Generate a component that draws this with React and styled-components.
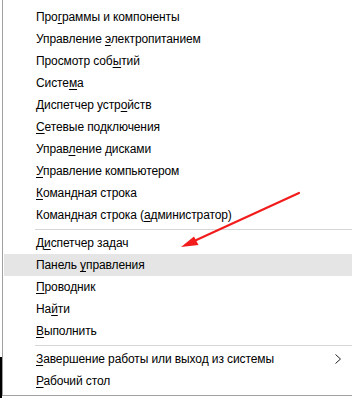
import React from 'react';
import styled, { createGlobalStyle } from 'styled-components';

const GlobalStyle = createGlobalStyle`
    html, body {
        margin: 0;
        padding: 0;
        background: #fff;
    }
    body {
        font-family: "Segoe UI", "Liberation Sans", Arial, sans-serif;
        overflow: hidden;
    }
`

const groups = [
    [
        ['Про', 'г', 'раммы и компоненты'],
        ['Управление ', 'э', 'лектропитанием'],
        ['Просмотр соб', 'ы', 'тий'],
        ['Систе', 'м', 'а'],
        ['Диспетчер устр', 'о', 'йств'],
        ['', 'С', 'етевые подключения'],
        ['Управ', 'л', 'ение дисками'],
        ['', 'У', 'правление компьютером'],
        ['', 'К', 'омандная строка'],
        ['Командная строка (', 'а', 'дминистратор)'],
    ],
    [
        ['Д', 'и', 'спетчер задач'],
        ['Панель ', 'у', 'правления', 'active'],
        ['', 'П', 'роводник'],
        ['На', 'й', 'ти'],
        ['', 'В', 'ыполнить'],
    ],
    [
        ['', 'З', 'авершение работы или выход из системы', 'sub'],
        ['', 'Р', 'абочий стол'],
    ],
]

const Chevron = () => (
    <svg width="8" height="10" viewBox="0 0 8 10">
        <polyline points="1.5,0.5 6.5,5 1.5,9.5" fill="none" stroke="#222" strokeWidth="1" />
    </svg>
)

const Arrow = () => (
    <ArrowLayer width="352" height="398" viewBox="0 0 352 398">
        <line x1="299" y1="193" x2="192" y2="242" stroke="#f21c1c" strokeWidth="2.2" strokeLinecap="round" />
        <polygon points="181,247 194,236.5 198.5,245" fill="#f21c1c" />
    </ArrowLayer>
)

const App = () => {
    return (
        <Page>
            <GlobalStyle />
            <Menu>
                {groups.map((items, gi) => (
                    <React.Fragment key={gi}>
                        {gi > 0 && <Separator />}
                        {items.map((el, i) => (
                            <Item key={i} $active={el[3] === 'active'}>
                                <Label>
                                    {el[0]}<Key>{el[1]}</Key>{el[2]}
                                </Label>
                                {el[3] === 'sub' && <SubMark><Chevron /></SubMark>}
                            </Item>
                        ))}
                    </React.Fragment>
                ))}
            </Menu>
            <Arrow />
        </Page>
    );
};

const Page = styled.div`
    position: relative;
    width: 352px;
    height: 398px;
    padding-left: 2px;
    box-sizing: border-box;
    background: linear-gradient(to bottom, #fff 357px, #000 357px) no-repeat left top / 2px 100%;
    overflow: hidden;
`

const Menu = styled.div`
    background: #fff;
    border-left: 1px solid #a0a0a0;
    border-bottom: 1px solid #a0a0a0;
    padding: 6px 0 3px 0;
    width: 420px;
`

const Item = styled.div`
    display: flex;
    align-items: center;
    height: 22px;
    padding-left: 32px;
    margin-left: 1px;
    background: ${props => props.$active ? '#e5e5e5' : 'transparent'};
    position: relative;
`

const Label = styled.span`
    font-size: 12px;
    line-height: 22px;
    letter-spacing: -0.1px;
    color: #000;
    white-space: nowrap;
`

const Key = styled.span`
    text-decoration: underline;
    text-underline-offset: 2px;
`

const SubMark = styled.span`
    position: absolute;
    left: 330px;
    top: 6px;
    display: flex;
`

const Separator = styled.div`
    height: 6px;
    margin-left: 32px;
    display: flex;
    align-items: center;

    &::after{
        content: '';
        flex: 1;
        height: 1px;
        background: #d7d7d7;
    }
`

const ArrowLayer = styled.svg`
    position: absolute;
    left: 0;
    top: 0;
    pointer-events: none;
`

export default App;
